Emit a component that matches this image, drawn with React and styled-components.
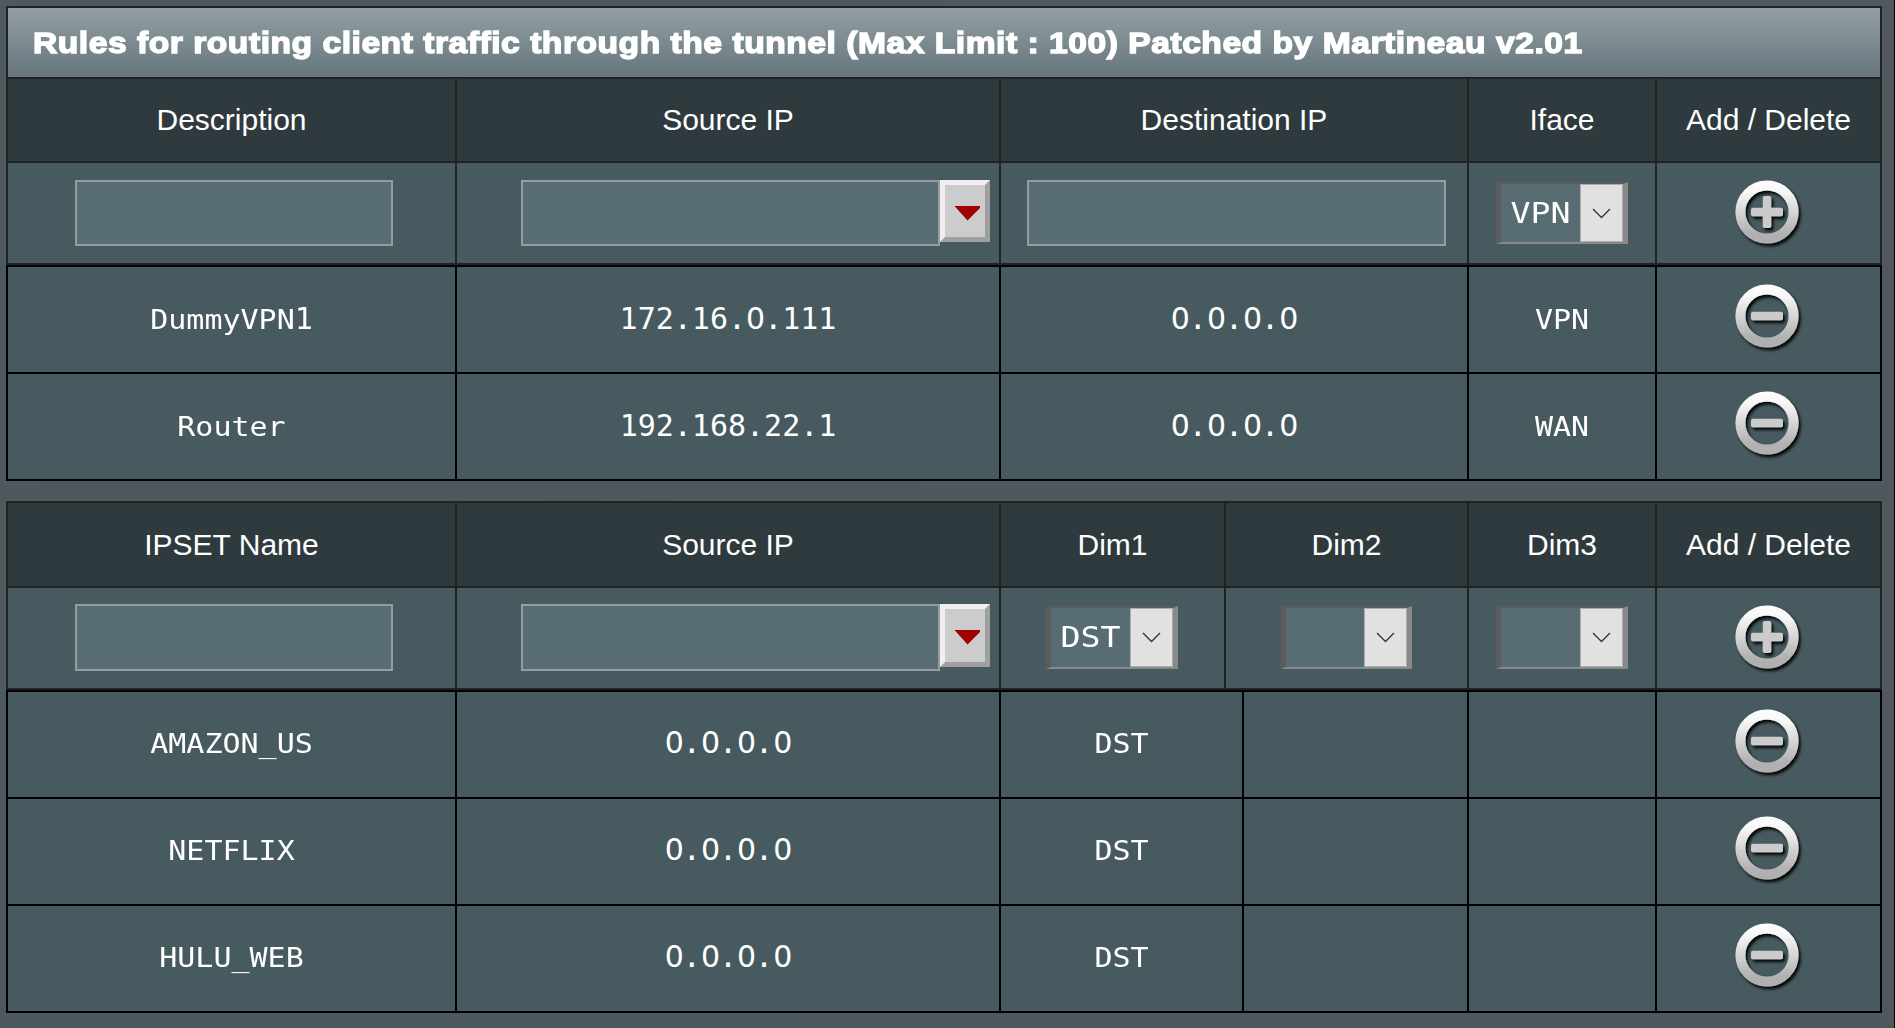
import React from "react";
import styled, { createGlobalStyle } from "styled-components";

const GlobalStyle = createGlobalStyle`
  body { margin: 0; background: #4d595d; }
  *, *::before, *::after { box-sizing: border-box; }
`;

const Page = styled.main`
  width: 1895px;
  height: 1028px;
  padding: 6px 0 0 6px;
  overflow: hidden;
  border-right: 1px solid #000;
  background: linear-gradient(to right, #4d595d, #4f585d);
  color: #fff;
  font-family: "Liberation Sans", Arial, sans-serif;
`;

const Section = styled.section`
  width: 1876px;
  margin-bottom: 20px;
`;

const Panel = styled.div`
  display: grid;
  gap: 2px;
  padding: 2px;
  background: ${(p) => p.$line};
`;

const Row = styled.div`
  display: grid;
  grid-template-columns: ${(p) => p.$columns};
  gap: 2px;
  height: ${(p) => p.$height}px;
`;

const Title = styled.h1`
  display: flex;
  align-items: center;
  height: 69px;
  margin: 0;
  padding: 0 0 0 25px;
  background: linear-gradient(to bottom, #92a0a5, #66757c);
  font: 700 30px/36px "Liberation Sans", Arial, sans-serif;
  white-space: nowrap;
`;

const TitleText = styled.span`
  display: inline-block;
  letter-spacing: 0.47px;
  transform: scaleX(1.12);
  transform-origin: 0 50%;
  -webkit-text-stroke: 1.4px #fff;
`;

const Cell = styled.div`
  display: flex;
  align-items: center;
  justify-content: center;
  min-width: 0;
  background: #475a5f;
`;

const HeadCell = styled(Cell)`
  background: #2f3a3e;
  font-size: 30px;
  line-height: 34px;
`;

const FormCell = styled(Cell)`
  align-items: flex-start;
  justify-content: flex-start;
  padding: ${(p) => p.$top}px 0 0 ${(p) => p.$left}px;
`;

const ListPanel = styled(Panel)`
  --text-lift: ${(p) => p.$lift}px;
`;

const Mono = styled.span`
  padding-bottom: var(--text-lift);
  font-family: "DejaVu Sans Mono", monospace;
  font-size: 30px;
  line-height: 36px;
  white-space: nowrap;
`;

const Label = styled(Mono)`
  display: inline-block;
  transform: scaleY(0.88);
  transform-origin: 50% 28px;
`;

const TallDigit = styled.span`
  display: inline-block;
  transform: scaleY(1.136);
  transform-origin: 50% 28px;
`;

const PlainZero = styled.span`
  font-family: "DejaVu Sans", sans-serif;
  letter-spacing: -1.02px;
`;

const Field = styled.input`
  display: block;
  width: ${(p) => p.$width}px;
  height: ${(p) => p.$height}px;
  padding: 0 8px;
  border: 2px solid #929ea1;
  border-radius: 0;
  background: #596d74;
  color: #fff;
  outline: none;
`;

const DropButton = styled.button`
  display: block;
  width: 50px;
  height: ${(p) => p.$height}px;
  padding: 4px 0 0 9px;
  border: 5px solid;
  border-color: #efefef #a0a0a0 #a0a0a0 #efefef;
  border-radius: 0;
  background: #ccc;
  line-height: 0;
  text-align: left;
`;

const SelectBox = styled.div`
  display: flex;
  width: ${(p) => p.$width}px;
  height: ${(p) => p.$height}px;
  margin-top: 2px;
  border-style: solid;
  border-width: 2px 5px;
  border-color: #5c5c5c #898989 #898989 #5c5c5c;
  background: #576d73;
`;

const SelectValue = styled.span`
  flex: 1;
  padding: 9px 0 0 9.5px;
  font: 33.3px/40px "DejaVu Sans Mono", monospace;
  transform: scaleY(0.865);
  transform-origin: 50% 32px;
  white-space: nowrap;
`;

const SelectArrow = styled.span`
  display: flex;
  align-items: center;
  justify-content: center;
  flex: none;
  width: 43px;
  border: 1px solid #adadad;
  background: #e1e1e1;
`;

const IconWrap = styled.span`
  display: block;
  width: 80px;
  height: 80px;
  margin: -${(p) => p.$lift}px 3px 0 0;
  line-height: 0;
`;

function RoundIcon({ plus = false, lift = 7 }) {
  const id = React.useId();
  return (
    <IconWrap $lift={lift}>
      <svg width="80" height="80" viewBox="-40 -40 80 80">
        <defs>
          <linearGradient id={`${id}g`} gradientUnits="userSpaceOnUse" x1="0" y1="-32" x2="0" y2="32">
            <stop offset="0" stopColor="#fff" />
            <stop offset="0.2" stopColor="#f6f6f6" />
            <stop offset="0.82" stopColor="#b2b2b2" />
            <stop offset="1" stopColor="#aeaeae" />
          </linearGradient>
          <filter id={`${id}s`} filterUnits="userSpaceOnUse" x="-40" y="-40" width="80" height="80">
            <feDropShadow dx="2" dy="2.6" stdDeviation="1.8" floodColor="#000" floodOpacity="1" />
          </filter>
        </defs>
        <g filter={`url(#${id}s)`}>
          <circle r="26.6" fill="none" stroke={`url(#${id}g)`} strokeWidth="10" />
          <rect x="-16" y="-4.2" width="32" height="8.4" rx="1.8" fill="#cbcbcb" />
          {plus && <rect x="-4.2" y="-16" width="8.4" height="32" rx="1.8" fill="#cbcbcb" />}
        </g>
      </svg>
    </IconWrap>
  );
}

function Address({ value }) {
  return (
    <Mono>
      {value.split(/(0)/).filter(Boolean).map((part, i) =>
        part === "0" ? <PlainZero key={i}>0</PlainZero> : part
      )}
    </Mono>
  );
}

function Name({ value }) {
  const [, text, digit] = value.match(/^(.*?)(\d?)$/);
  return (
    <Label>
      {text}
      {digit && <TallDigit>{digit}</TallDigit>}
    </Label>
  );
}

function Select({ value, width = 132, height }) {
  return (
    <SelectBox $width={width} $height={height}>
      <SelectValue>{value}</SelectValue>
      <SelectArrow>
        <svg width="19" height="11" viewBox="0 0 19 11">
          <path d="M1 1 L9.5 9.5 L18 1" fill="none" stroke="#333" strokeWidth="1.3" />
        </svg>
      </SelectArrow>
    </SelectBox>
  );
}

function SourceField({ top, height }) {
  return (
    <FormCell $top={top} $left={64}>
      <Field $width={419} $height={height} aria-label="Source IP" />
      <DropButton $height={height - 4} aria-label="Choose client">
        <svg width="26" height="17" viewBox="0 0 26 17">
          <path d="M0.5 1 H26 V3 L13.5 15.5 Z" fill="#a00000" />
        </svg>
      </DropButton>
    </FormCell>
  );
}

const WIDE = "447px 542px 466px 186px 223px";
const SPLIT_FORM = "447px 542px 223px 241px 186px 223px";
const SPLIT_LIST = "447px 542px 241px 223px 186px 223px";

const RULES = [
  { name: "DummyVPN1", source: "172.16.0.111", target: "0.0.0.0", iface: "VPN" },
  { name: "Router", source: "192.168.22.1", target: "0.0.0.0", iface: "WAN" },
];

const IPSETS = ["AMAZON_US", "NETFLIX", "HULU_WEB"];

function HeadRow({ columns, height, labels }) {
  return (
    <Row $columns={columns} $height={height}>
      {labels.map((label) => (
        <HeadCell key={label}>{label}</HeadCell>
      ))}
    </Row>
  );
}

export default function App() {
  return (
    <>
      <GlobalStyle />
      <Page>
        <Section>
          <Panel $line="#222">
            <Title>
              <TitleText>Rules for routing client traffic through the tunnel (Max Limit : 100) Patched by Martineau v2.01</TitleText>
            </Title>
            <HeadRow
              columns={WIDE}
              height={82}
              labels={["Description", "Source IP", "Destination IP", "Iface", "Add / Delete"]}
            />
            <Row $columns={WIDE} $height={100}>
              <FormCell $top={17} $left={67}>
                <Field $width={318} $height={66} aria-label="Description" />
              </FormCell>
              <SourceField top={17} height={66} />
              <FormCell $top={17} $left={26}>
                <Field $width={419} $height={66} aria-label="Destination IP" />
              </FormCell>
              <FormCell $top={17} $left={27}>
                <Select value="VPN" height={62} />
              </FormCell>
              <Cell>
                <RoundIcon plus lift={2} />
              </Cell>
            </Row>
          </Panel>
          <ListPanel $line="#000" $lift={1}>
            {RULES.map((rule) => (
              <Row key={rule.name} $columns={WIDE} $height={105}>
                <Cell><Name value={rule.name} /></Cell>
                <Cell><Address value={rule.source} /></Cell>
                <Cell><Address value={rule.target} /></Cell>
                <Cell><Name value={rule.iface} /></Cell>
                <Cell><RoundIcon /></Cell>
              </Row>
            ))}
          </ListPanel>
        </Section>
        <Section>
          <Panel $line="#222">
            <HeadRow
              columns={SPLIT_FORM}
              height={83}
              labels={["IPSET Name", "Source IP", "Dim1", "Dim2", "Dim3", "Add / Delete"]}
            />
            <Row $columns={SPLIT_FORM} $height={100}>
              <FormCell $top={16} $left={67}>
                <Field $width={318} $height={67} aria-label="IPSET Name" />
              </FormCell>
              <SourceField top={16} height={67} />
              <FormCell $top={16} $left={45}>
                <Select value="DST" height={63} />
              </FormCell>
              <FormCell $top={16} $left={55}>
                <Select value="" width={131} height={63} />
              </FormCell>
              <FormCell $top={16} $left={27}>
                <Select value="" height={63} />
              </FormCell>
              <Cell>
                <RoundIcon plus lift={2} />
              </Cell>
            </Row>
          </Panel>
          <ListPanel $line="#000" $lift={3}>
            {IPSETS.map((name) => (
              <Row key={name} $columns={SPLIT_LIST} $height={105}>
                <Cell><Name value={name} /></Cell>
                <Cell><Address value="0.0.0.0" /></Cell>
                <Cell><Name value="DST" /></Cell>
                <Cell />
                <Cell />
                <Cell><RoundIcon /></Cell>
              </Row>
            ))}
          </ListPanel>
        </Section>
      </Page>
    </>
  );
}
